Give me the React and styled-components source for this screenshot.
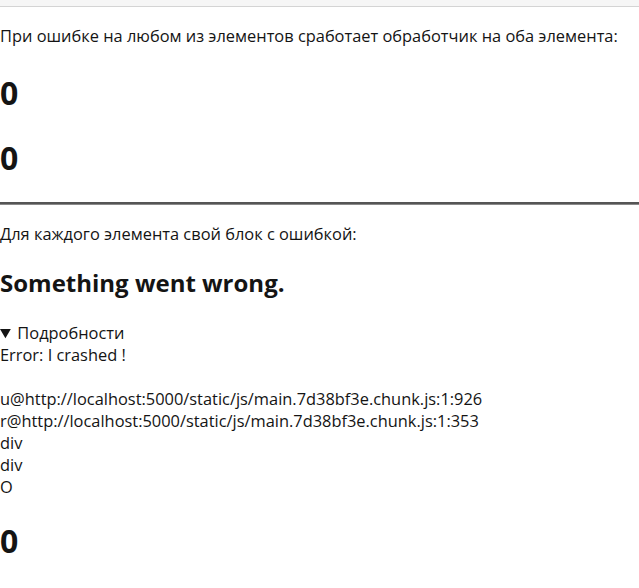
import React from 'react';
import styled, { createGlobalStyle } from 'styled-components';

const GlobalStyle = createGlobalStyle`
  body {
    margin: 0;
    background: #fff;
    color: #141414;
    font-family: 'Open Sans', 'Noto Sans', sans-serif;
    font-size: 16.4px;
    line-height: 22px;
  }
`;

const TopStrip = styled.div`
  height: 6px;
  background: #f6f6f6;
  border-bottom: 1px solid #d4d4d4;
`;

const Section = styled.section`
  display: flex;
  flex-direction: column;
  padding-top: ${(props) => props.top || 0}px;
`;

const Text = styled.p`
  margin: 0;
`;

const Counter = styled.h1`
  margin: ${(props) => props.gap || 25}px 0 0;
  font-size: 32px;
  line-height: 40px;
  font-weight: 700;
`;

const Divider = styled.hr`
  margin: 24px 0 0;
  height: 0;
  border: 0;
  border-top: 2px solid #555;
  border-bottom: 1px solid #8a8a8a;
`;

const Title = styled.h2`
  margin: 23px 0 0;
  font-size: 24px;
  line-height: 30px;
  font-weight: 700;
`;

const Details = styled.details`
  margin-top: 24px;
  white-space: pre-wrap;

  summary {
    cursor: pointer;
  }
`;

const stack = `
u@http://localhost:5000/static/js/main.7d38bf3e.chunk.js:1:926
r@http://localhost:5000/static/js/main.7d38bf3e.chunk.js:1:353
div
div
O`;

const App = () => (
  <>
    <GlobalStyle />
    <TopStrip />
    <Section top={18}>
      <Text>При ошибке на любом из элементов сработает обработчик на оба элемента:</Text>
      <Counter gap={26}>0</Counter>
      <Counter>0</Counter>
    </Section>
    <Divider />
    <Section top={18}>
      <Text>Для каждого элемента свой блок с ошибкой:</Text>
      <Title>Something went wrong.</Title>
      <Details open>
        <summary>Подробности</summary>
        Error: I crashed !
        <br />
        {stack}
      </Details>
      <Counter gap={23}>0</Counter>
    </Section>
  </>
);

export default App;
